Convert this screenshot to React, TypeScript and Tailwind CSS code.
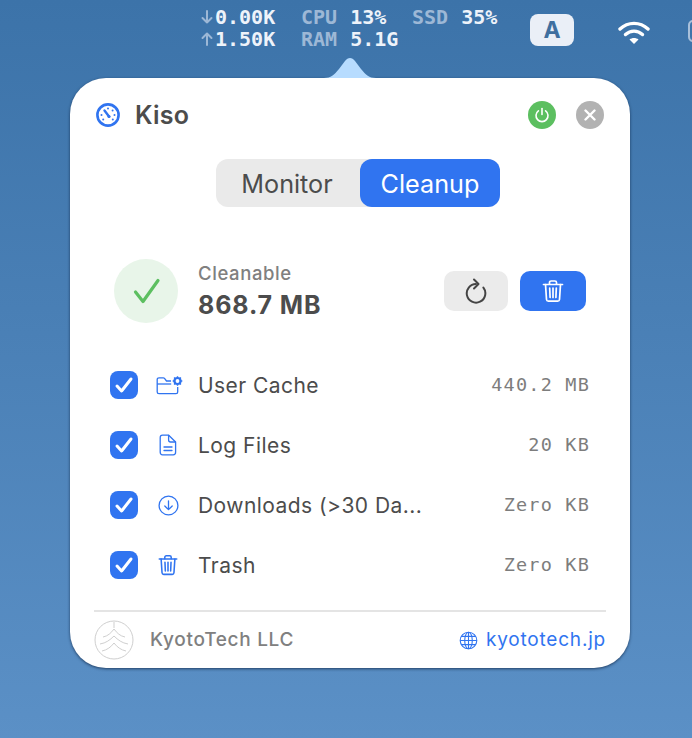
const BLUE = "#3074f0";

function GaugeIcon() {
  return (
    <svg width="26" height="26" viewBox="0 0 26 26" fill="none">
      <circle cx="13" cy="13" r="10.6" stroke={BLUE} strokeWidth="2.6" />
      <path d="M9.5 8.5 L14 14.5" stroke={BLUE} strokeWidth="2.4" strokeLinecap="round" />
      <circle cx="14" cy="14.5" r="1.6" fill={BLUE} />
      <g fill={BLUE}>
        <circle cx="13" cy="6.5" r="1" />
        <circle cx="17.6" cy="8.4" r="1" />
        <circle cx="19.5" cy="13" r="1" />
        <circle cx="6.5" cy="13" r="1" />
        <circle cx="8.2" cy="17.6" r="1" />
        <circle cx="17.8" cy="17.6" r="1" />
      </g>
    </svg>
  );
}

function PowerIcon() {
  return (
    <svg width="16" height="16" viewBox="0 0 16 16" fill="none" stroke="white" strokeWidth="1.6" strokeLinecap="round">
      <path d="M8 1.5v6" />
      <path d="M4.4 3.8a6 6 0 1 0 7.2 0" />
    </svg>
  );
}

function CloseIcon() {
  return (
    <svg width="12" height="12" viewBox="0 0 12 12" fill="none" stroke="white" strokeWidth="2.4" strokeLinecap="round">
      <path d="M1.5 1.5l9 9M10.5 1.5l-9 9" />
    </svg>
  );
}

function TrashIcon({ color, size }: { color: string; size: number }) {
  return (
    <svg width={size} height={size} viewBox="0 0 24 24" fill="none" stroke={color} strokeWidth="1.7" strokeLinecap="round" strokeLinejoin="round">
      <path d="M2.5 5.5h19" />
      <path d="M8.5 5.2V3.6c0-1 .7-1.6 1.6-1.6h3.8c.9 0 1.6.6 1.6 1.6v1.6" />
      <path d="M4.5 5.5l1 15c.1 1 .8 1.7 1.8 1.7h9.4c1 0 1.7-.7 1.8-1.7l1-15" />
      <path d="M8.7 9l.4 9.5M12 9v9.5M15.3 9l-.4 9.5" />
    </svg>
  );
}

function FolderGearIcon() {
  return (
    <svg className="ml-[3px]" width="27" height="20" viewBox="0 0 27 20" fill="none" stroke={BLUE} strokeWidth="1.3" strokeLinejoin="round">
      <path d="M15 6H10.500L8.500 3.400C8.200 3 7.800 2.800 7.300 2.800H3C2 2.800 1.200 3.600 1.200 4.600V17c0 1 .8 1.700 1.800 1.700h17c1 0 1.700-.7 1.700-1.700v-5" />
      <path d="M1.200 9h14" />
      <circle cx="21.500" cy="6" r="3" strokeWidth="2.200" />
      <path d="M21.500 1.200v1.600M21.500 9.200v1.600M16.700 6h1.600M24.700 6h1.600M18.100 2.600l1.100 1.100M23.800 8.300l1.100 1.100M18.100 9.400l1.100-1.100M23.800 3.700l1.100-1.100" strokeWidth="1.400" />
    </svg>
  );
}

function FileIcon() {
  return (
    <svg width="18" height="22" viewBox="0 0 18 22" fill="none" stroke={BLUE} strokeWidth="1.3" strokeLinejoin="round" strokeLinecap="round">
      <path d="M3.500 1.200h6.200L16.600 8v10.300c0 1.400-1 2.500-2.400 2.500H3.500c-1.400 0-2.300-1.100-2.300-2.500V3.700c0-1.400 .9-2.500 2.300-2.500z" />
      <path d="M9.600 1.400V6c0 1.300 .8 2 2 2h4.800" />
      <path d="M5 13h8M5 16.500h8" />
    </svg>
  );
}

function DownloadIcon() {
  return (
    <svg width="21" height="21" viewBox="0 0 21 21" fill="none" stroke={BLUE} strokeWidth="1.3" strokeLinecap="round" strokeLinejoin="round">
      <circle cx="10.500" cy="10.500" r="9.400" />
      <path d="M10.500 5.800v8.600M6.800 11l3.700 3.600 3.700-3.600" />
    </svg>
  );
}

function GlobeIcon() {
  return (
    <svg width="19" height="19" viewBox="0 0 19 19" fill="none" stroke={BLUE} strokeWidth="1.1">
      <circle cx="9.500" cy="9.500" r="8.300" />
      <ellipse cx="9.500" cy="9.500" rx="3.800" ry="8.300" />
      <path d="M9.500 1.200v16.600M1.200 9.500h16.600M2.400 5.400h14.200M2.400 13.600h14.200" />
    </svg>
  );
}

function KyotoLogo() {
  return (
    <svg width="40" height="40" viewBox="0 0 40 40" fill="none" stroke="#cfcfcf" strokeWidth="1">
      <circle cx="20" cy="20" r="19" />
      <path d="M20 2v6" />
      <path d="M9 17c5-1 8-4 11-8 3 4 6 7 11 8" />
      <path d="M6 24c6-1 10-4 14-8 4 4 8 7 14 8" />
      <path d="M8 31c5-1 9-4 12-8 3 4 7 7 12 8" />
    </svg>
  );
}

function NetArrow({ up }: { up?: boolean }) {
  return (
    <svg className={up ? "mr-[2px] rotate-180" : "mr-[2px]"} width="12" height="14" viewBox="0 0 12 14" fill="none" stroke="#9db8d6" strokeWidth="2" strokeLinecap="round" strokeLinejoin="round">
      <path d="M6 1v11.500M1.500 8L6 12.500 10.500 8" />
    </svg>
  );
}

function CheckBox() {
  return (
    <div className="flex h-[28px] w-[28px] items-center justify-center rounded-[8px] bg-[#3074f0]">
      <svg width="20" height="18" viewBox="0 0 20 18" fill="none" stroke="white" strokeWidth="3" strokeLinecap="round" strokeLinejoin="round">
        <path d="M3 10l4.600 5L17 3" />
      </svg>
    </div>
  );
}

const rows = [
  { icon: <FolderGearIcon />, label: "User Cache", size: "440.2 MB" },
  { icon: <FileIcon />, label: "Log Files", size: "20 KB" },
  { icon: <DownloadIcon />, label: "Downloads (>30 Da...", size: "Zero KB" },
  { icon: <TrashIcon color={BLUE} size={22} />, label: "Trash", size: "Zero KB" },
];

function MenuBar() {
  return (
    <div className="relative flex h-[56px] items-start pl-[201px] pt-[6px] font-['DejaVu_Sans_Mono',monospace] text-[20px] font-bold leading-[22px] text-[#eef3fa]">
      <div className="w-[100px]">
        <div className="flex items-center"><NetArrow />0.00K</div>
        <div className="flex items-center"><NetArrow up />1.50K</div>
      </div>
      <div className="w-[111px]">
        <div><span className="mr-[13px] text-[#9db8d6]">CPU</span>13%</div>
        <div><span className="mr-[13px] text-[#9db8d6]">RAM</span>5.1G</div>
      </div>
      <div className="w-[118px]">
        <span className="mr-[13px] text-[#9db8d6]">SSD</span>35%
      </div>
      <div className="mt-[8px] flex h-[32px] w-[44px] items-center justify-center rounded-[8px] bg-[#eaeff7] font-['Inter',sans-serif] text-[23px] font-bold text-[#3f6f9f]">
        A
      </div>
      <svg className="ml-[44px] mt-[14px]" width="32" height="25" viewBox="0 0 32 25" fill="none" stroke="white" strokeWidth="3.400" strokeLinecap="round">
        <path d="M2 9c8-7.500 20-7.500 28 0" />
        <path d="M7.500 14.500c5-4.500 12-4.500 17 0" />
        <path d="M16 24l-4.500-4.500c2.500-2 6.500-2 9 0z" fill="white" stroke="none" />
      </svg>
      <div className="absolute left-[688px] top-[20px] h-[22px] w-[30px] rounded-[5px] border-2 border-[#a9c0da]" />
    </div>
  );
}

export default function App() {
  return (
    <div className="h-[738px] w-[692px] overflow-hidden bg-gradient-to-b from-[#3c73a9] to-[#5b90c6] font-['Inter',sans-serif]">
      <MenuBar />
      <div className="relative ml-[320px] h-[22px] w-[60px]">
        <svg className="absolute left-0 top-0" width="60" height="22" viewBox="0 0 60 22">
          <path d="M4 22c7 0 10-3 15-9l6-8c3-4 7-4 10 0l6 8c5 6 8 9 15 9z" fill="#b7dcff" />
        </svg>
      </div>
      <div className="ml-[70px] flex h-[590px] w-[560px] flex-col rounded-[36px] bg-white px-[24px] pt-[23px] shadow-[0_1px_3px_rgba(10,30,60,0.7)]">
        <div className="flex h-[28px] items-center">
          <div className="ml-[1px]"><GaugeIcon /></div>
          <span className="ml-[14px] mt-[2px] text-[25px] font-semibold tracking-[0.2px] text-[#4c4c4c]">Kiso</span>
          <div className="ml-auto flex gap-[20px] pr-[2px]">
            <div className="flex h-[28px] w-[28px] items-center justify-center rounded-full bg-[#5cbf60]"><PowerIcon /></div>
            <div className="flex h-[28px] w-[28px] items-center justify-center rounded-full bg-[#b2b2b2]"><CloseIcon /></div>
          </div>
        </div>

        <div className="ml-[122px] mt-[30px] flex h-[48px] w-[284px] rounded-[12px] bg-[#eaeaea] text-[25.200px]">
          <div className="flex w-[142px] items-center justify-center pt-[3px] text-[#4c4c4c]">Monitor</div>
          <div className="ml-[2px] flex w-[140px] items-center justify-center rounded-[12px] bg-[#3074f0] pt-[3px] text-white">Cleanup</div>
        </div>

        <div className="mt-[52px] flex h-[64px] items-center px-[20px]">
          <div className="flex h-[64px] w-[64px] items-center justify-center rounded-full bg-[#e8f5e9]">
            <svg className="ml-[1px]" width="28" height="26" viewBox="0 0 28 26" fill="none" stroke="#5cbf60" strokeWidth="3.200" strokeLinecap="round" strokeLinejoin="round">
              <path d="M2.500 14l7.500 9.500L25 2.500" />
            </svg>
          </div>
          <div className="ml-[20px]">
            <div className="text-[18.500px] font-medium leading-[28px] tracking-[0.6px] text-[#808080]">Cleanable</div>
            <div className="text-[25px] font-bold leading-[36px] tracking-[0.9px] text-[#4c4c4c]">868.7 MB</div>
          </div>
          <div className="ml-auto flex gap-[12px]">
            <div className="flex h-[40px] w-[64px] items-center justify-center rounded-[10px] bg-[#ebebeb]">
              <svg width="24" height="26" viewBox="0 0 24 26" fill="none" stroke="#444444" strokeWidth="2" strokeLinecap="round" strokeLinejoin="round">
                <path d="M12 6a9.300 9.300 0 1 0 7.400 3.600" />
                <path d="M10 1.500l4.500 4.500-4.500 4.500" />
              </svg>
            </div>
            <div className="flex h-[40px] w-[66px] items-center justify-center rounded-[10px] bg-[#3074f0]">
              <TrashIcon color="white" size={24} />
            </div>
          </div>
        </div>

        <div className="mt-[32px] flex flex-col px-[16px]">
          {rows.map((row) => (
            <div key={row.label} className="flex h-[60px] items-center">
              <CheckBox />
              <div className="flex w-[60px] justify-center">{row.icon}</div>
              <span className="mt-[2px] text-[21px] tracking-[0.45px] text-[#4c4c4c]">{row.label}</span>
              <span className="ml-auto font-['DejaVu_Sans_Mono',monospace] text-[18.500px] font-medium tracking-[1.200px] text-[#7d7d7d]">{row.size}</span>
            </div>
          ))}
        </div>

        <div className="mt-[15px] h-[2px] bg-[#e4e4e4]" />
        <div className="flex h-[56px] items-center">
          <KyotoLogo />
          <span className="ml-[16px] text-[19px] font-medium tracking-[0.7px] text-[#808080]">KyotoTech LLC</span>
          <div className="ml-auto"><GlobeIcon /></div>
          <span className="ml-[8px] text-[19px] tracking-[0.8px] text-[#3074f0]">kyototech.jp</span>
        </div>
      </div>
    </div>
  );
}
